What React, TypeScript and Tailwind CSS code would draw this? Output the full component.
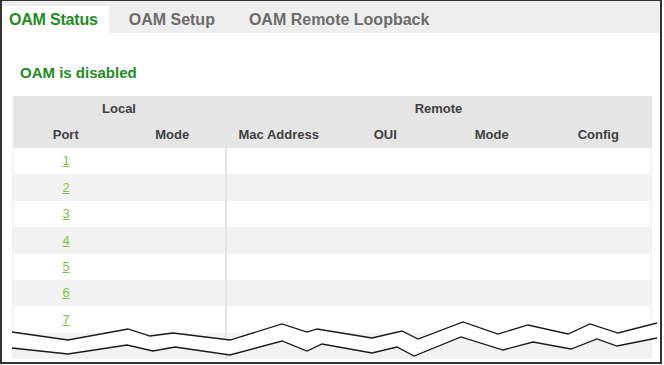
import React from "react";

const upper: [number, number][] = [
  [12, 332], [68, 340], [128, 329], [150, 336], [173, 333], [230, 340],
  [282, 324], [307, 332], [317, 329], [372, 338], [402, 331], [418, 339],
  [463, 322], [498, 334], [528, 325], [568, 334], [590, 324], [618, 333], [657, 323],
];
const lower: [number, number][] = [
  [12, 348], [68, 354], [127, 345], [153, 351], [175, 347], [230, 355],
  [282, 341], [307, 351], [322, 344], [372, 353], [397, 347], [414, 356],
  [461, 337], [503, 350], [533, 342], [571, 349], [597, 339], [617, 346], [657, 338],
];

const pts = (p: [number, number][]) => p.map(([x, y]) => `${x},${y}`).join(" ");

const ports = [1, 2, 3, 4, 5, 6, 7, 8];

const App = () => {
  return (
    <div
      className="relative w-[662px] h-[364px] bg-white border-t border-l-2 border-r-2 border-b-2 border-[#333] overflow-hidden"
      style={{ fontFamily: '"Liberation Sans", Arial, sans-serif' }}
    >
      {/* tabs */}
      <div className="h-[32px] bg-[#eeeeee] flex items-end">
        <div className="h-[27px] bg-white pl-[7px] pr-[11px] flex items-center text-[16px] font-bold tracking-[-0.2px] text-[#1e8c1e]">
          OAM Status
        </div>
        <div className="h-[27px] ml-[20px] flex items-center text-[16px] font-bold text-[#6b6b6b]">
          OAM Setup
        </div>
        <div className="h-[27px] ml-[34px] flex items-center text-[16px] font-bold text-[#6b6b6b]">
          OAM Remote Loopback
        </div>
      </div>

      <div className="pl-[10px]">
        <p className="mt-[30px] pl-[8px] h-[20px] leading-[20px] text-[15px] font-bold text-[#1e8c1e]">
          OAM is disabled
        </p>

        <table className="mt-[13px] w-[640px] table-fixed border-collapse text-[13px]">
          <thead className="bg-[#e5e5e5] text-[#404040] font-bold">
            <tr className="h-[26px]">
              <th colSpan={2} className="font-bold">Local</th>
              <th colSpan={4} className="font-bold">Remote</th>
            </tr>
            <tr className="h-[26px]">
              <th className="font-bold">Port</th>
              <th className="font-bold">Mode</th>
              <th className="font-bold">Mac Address</th>
              <th className="font-bold">OUI</th>
              <th className="font-bold">Mode</th>
              <th className="font-bold">Config</th>
            </tr>
          </thead>
          <tbody>
            {ports.map((p) => (
              <tr key={p} className={`h-[26.4px] ${p % 2 === 0 ? "bg-[#f2f2f2]" : "bg-white"}`}>
                <td className="text-center border-l border-[#eeeeee]">
                  {p < 8 && <span className="text-[#7cc243] underline">{p}</span>}
                </td>
                <td className="border-r-2 border-[#e4e4e4]"></td>
                <td></td>
                <td></td>
                <td></td>
                <td className="border-r border-[#eeeeee]"></td>
              </tr>
            ))}
          </tbody>
        </table>
      </div>

      {/* page break marks */}
      <svg
        className="absolute left-0 top-0 w-[658px] h-[361px] pointer-events-none"
        viewBox="2 1 658 361"
      >
        <polygon points={`${pts(upper)} ${pts([...lower].reverse())}`} fill="#ffffff" />
        <polyline points={pts(upper)} fill="none" stroke="#1a1a1a" strokeWidth="1.3" />
        <polyline points={pts(lower)} fill="none" stroke="#1a1a1a" strokeWidth="1.3" />
      </svg>
    </div>
  );
};

export default App;
